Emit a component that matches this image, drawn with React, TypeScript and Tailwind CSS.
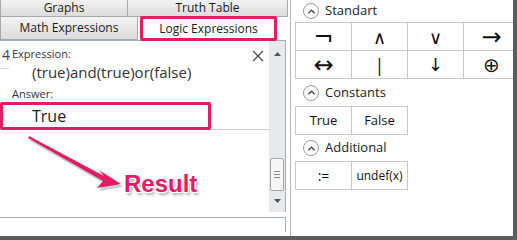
import { ChevronUp } from 'lucide-react'

const pink = '#e31d63'

function Tab({ label, className }: { label: string; className: string }) {
    return (
        <div
            className={`flex items-center justify-center border border-[#a9a9a9] bg-gradient-to-b from-[#f3f3f3] to-[#dcdcdc] text-[12px] text-[#1a1a1a] ${className}`}
        >
            {label}
        </div>
    )
}

function SectionHeader({ title }: { title: string }) {
    return (
        <div className="flex items-center gap-[6px] pl-[7px]">
            <div className="flex h-[16px] w-[16px] items-center justify-center rounded-full border border-[#9a9a9a]">
                <ChevronUp className="h-[11px] w-[11px] text-[#333]" strokeWidth={3} />
            </div>
            <span className="text-[13px] text-[#222]">{title}</span>
        </div>
    )
}

function Key({ children, className = '' }: { children: React.ReactNode; className?: string }) {
    return (
        <div
            className={`-ml-px -mt-px flex h-[29px] w-[57px] shrink-0 items-center justify-center border border-[#c9c9c9] bg-white leading-none text-[#111] ${className}`}
        >
            {children}
        </div>
    )
}

export default function App() {
    return (
        <div
            className="relative h-[240px] w-[517px] overflow-hidden border-b-4 border-r-4 border-[#5c5c5c] bg-white"
            style={{ fontFamily: '"Open Sans", "Noto Sans", sans-serif' }}
        >
            <div className="flex h-full">
                {/* Left pane */}
                <div className="flex w-[290px] shrink-0 flex-col">
                    {/* Tabs */}
                    <div className="flex h-[17px]">
                        <Tab label="Graphs" className="w-[128px] border-t-0" />
                        <Tab label="Truth Table" className="-ml-px w-[161px] border-t-0" />
                    </div>
                    <div className="flex h-[23px] items-end">
                        <Tab label="Math Expressions" className="-mt-px h-[24px] w-[138px]" />
                        <div
                            className="relative z-10 mb-[-1px] ml-[2px] flex h-[25px] w-[137px] items-center justify-center rounded-[2px] border-[3px] bg-white text-[12px] text-[#1a1a1a]"
                            style={{ borderColor: pink }}
                        >
                            Logic Expressions
                        </div>
                    </div>

                    {/* Editor */}
                    <div className="flex h-[172px] w-[286px] border-r border-t border-[#a3b0bb]">
                        <div className="relative flex flex-1">
                            <div className="w-[10px] shrink-0 overflow-hidden pt-[6px] text-right">
                                <div className="text-[14px] leading-[16px] text-[#444]">4</div>
                                <div className="mt-[5px] h-px w-[9px] bg-[#d6d6d6]" />
                            </div>
                            <div className="flex flex-1 flex-col">
                                <div className="flex items-start justify-between pl-[2px] pr-[5px] pt-[5px]">
                                    <span className="text-[11px] leading-[16px] text-[#333]">Expression:</span>
                                    <svg width="12" height="12" viewBox="0 0 12 12" className="mt-[4px]">
                                        <path d="M1 1 L11 11 M11 1 L1 11" stroke="#444" strokeWidth="1.2" />
                                    </svg>
                                </div>
                                <div className="pl-[22px] text-[15px] leading-[20px] text-[#333]">
                                    (true)and(true)or(false)
                                </div>
                                <div className="mt-[4px] pl-[2px] text-[11px] leading-[16px] text-[#333]">Answer:</div>
                                <div className="relative -ml-[10px] h-[28px] border-b border-[#cfcfcf]">
                                    <div
                                        className="flex h-[28px] w-[211px] items-center rounded-[2px] border-[3px] pl-[29px] text-[16px] text-[#222]"
                                        style={{ borderColor: pink }}
                                    >
                                        True
                                    </div>
                                </div>
                            </div>
                        </div>
                        {/* Scrollbar */}
                        <div className="flex w-[16px] shrink-0 flex-col items-center bg-[#e8e9ec] pb-[4px] pt-[11px]">
                            <svg width="7" height="4" viewBox="0 0 7 4">
                                <path d="M0 4 L3.5 0 L7 4 Z" fill="#555" />
                            </svg>
                            <div className="flex-1" />
                            <div className="flex h-[33px] w-[14px] flex-col items-center justify-center gap-[2px] rounded-[2px] border border-[#a5a5a5] bg-[#f6f6f6]">
                                <div className="h-px w-[6px] bg-[#888]" />
                                <div className="h-px w-[6px] bg-[#888]" />
                                <div className="h-px w-[6px] bg-[#888]" />
                            </div>
                            <svg width="7" height="4" viewBox="0 0 7 4" className="mb-[5px] mt-[8px]">
                                <path d="M0 0 L3.5 4 L7 0 Z" fill="#555" />
                            </svg>
                        </div>
                    </div>

                    {/* Input line */}
                    <div className="mt-[5px] h-[15px] w-[286px] border-r border-t border-[#a3b0bb]" />
                </div>

                {/* Right pane */}
                <div className="flex min-w-0 flex-1 flex-col border-l border-[#b7b7b7] pl-[5px]">
                    <div className="flex h-[22px] items-center">
                        <SectionHeader title="Standart" />
                    </div>
                    <div className="flex flex-col pt-px">
                        <div className="flex">
                            <Key className="font-['DejaVu_Sans'] text-[24px]">¬</Key>
                            <Key className="text-[18px]">∧</Key>
                            <Key className="text-[18px]">∨</Key>
                            <Key className="font-['DejaVu_Sans'] text-[24px]">→</Key>
                        </div>
                        <div className="flex">
                            <Key className="font-['DejaVu_Sans'] text-[24px]">↔</Key>
                            <Key className="text-[18px]">|</Key>
                            <Key className="font-['DejaVu_Sans'] text-[18px]">↓</Key>
                            <Key className="font-['DejaVu_Sans'] text-[20px]">⊕</Key>
                        </div>
                    </div>
                    <div className="flex h-[27px] items-center">
                        <SectionHeader title="Constants" />
                    </div>
                    <div className="flex pt-px">
                        <Key className="text-[13px]">True</Key>
                        <Key className="text-[13px]">False</Key>
                    </div>
                    <div className="flex h-[26px] items-center">
                        <SectionHeader title="Additional" />
                    </div>
                    <div className="flex pt-px">
                        <Key className="text-[14px]">:=</Key>
                        <Key className="text-[12px]">undef(x)</Key>
                    </div>
                </div>
            </div>

            {/* Annotation arrow */}
            <svg className="pointer-events-none absolute left-0 top-0" width="517" height="240">
                <g transform="translate(2 3)" fill="#00000033">
                    <polygon points="29,136 104,176 99,170 121,184 97,188 103,181 28,138" />
                </g>
                <polygon points="29,136 104,176 99,170 121,184 97,188 103,181 28,138" fill={pink} />
            </svg>
            <div
                className="absolute left-[124px] top-[170px] text-[24px] font-bold leading-[28px]"
                style={{
                    fontFamily: '"Liberation Sans", Arial, sans-serif',
                    color: pink,
                    textShadow:
                        '1px 1px 0 #fff, -1px -1px 0 #fff, 1px -1px 0 #fff, -1px 1px 0 #fff, 2px 3px 3px rgba(0,0,0,0.35)',
                }}
            >
                Result
            </div>
        </div>
    )
}
